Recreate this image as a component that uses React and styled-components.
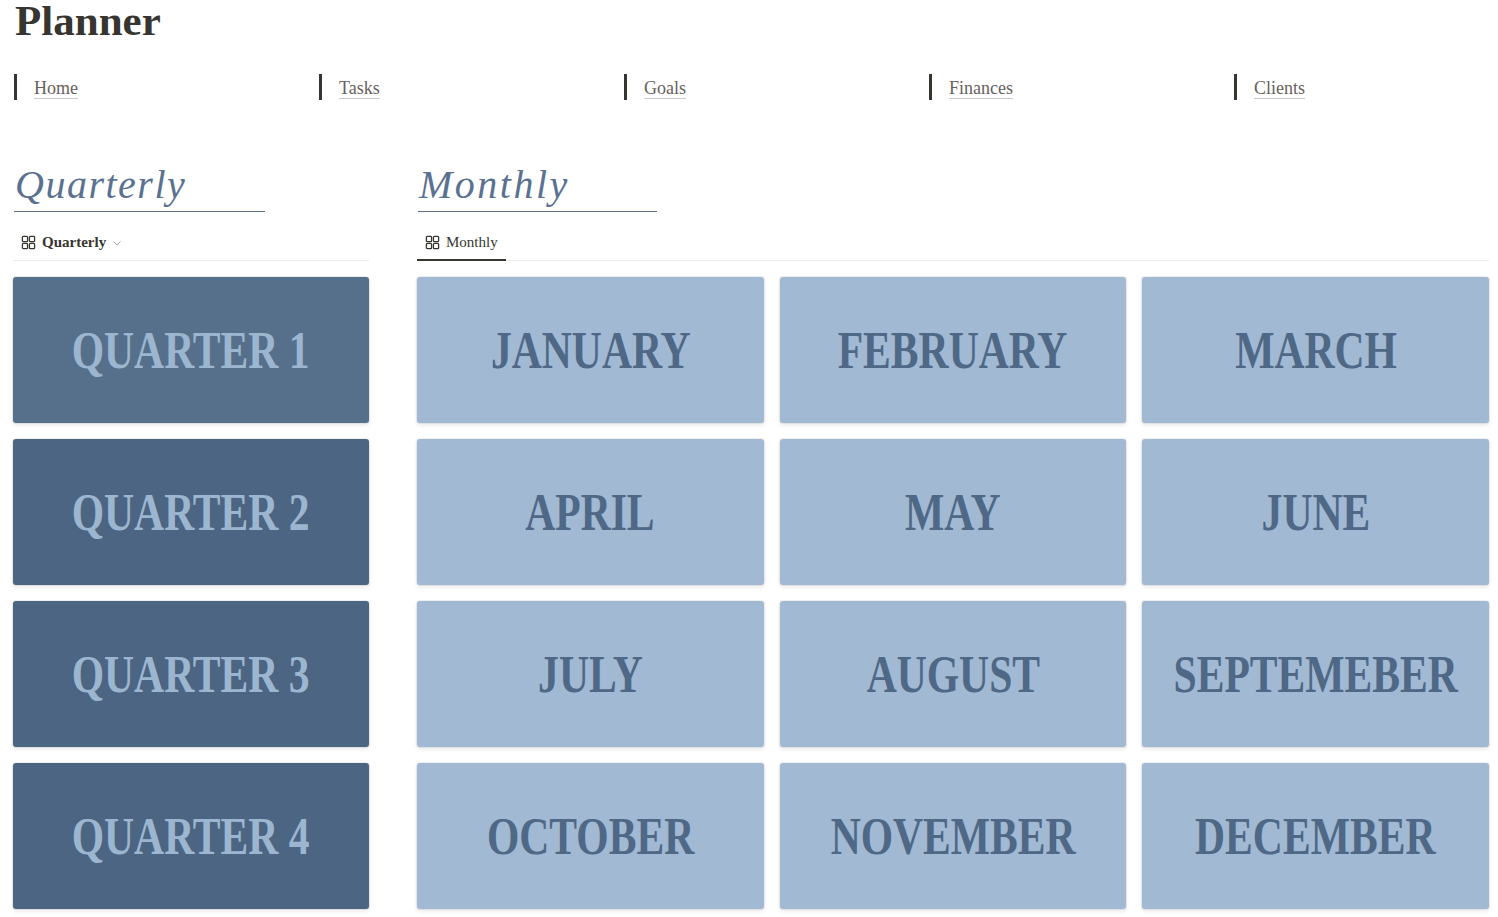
import React from "react";
import styled, { createGlobalStyle } from "styled-components";

const GlobalStyle = createGlobalStyle`
  html, body {
    margin: 0;
    padding: 0;
    background: #ffffff;
    font-family: "Liberation Serif", "DejaVu Serif", serif;
    color: #37352f;
  }
  * { box-sizing: border-box; }
`;

const Page = styled.div`
  padding: 0 9px 0 13px;
  width: 1498px;
  height: 917px;
  overflow: hidden;
`;

const Title = styled.h1`
  margin: 0 0 0 2px;
  font-size: 43px;
  line-height: 42px;
  font-weight: 700;
  color: #37352f;
`;

const Nav = styled.nav`
  display: grid;
  grid-template-columns: repeat(5, 255px);
  column-gap: 50px;
  margin-top: 32px;
  padding-left: 1px;
`;

const NavItem = styled.div`
  display: flex;
  align-items: center;
  height: 26px;
  border-left: 3px solid #37352f;
  padding-left: 17px;
`;

const NavLink = styled.a`
  font-size: 18px;
  line-height: 20px;
  color: #66625c;
  text-decoration: none;
  border-bottom: 1px solid #c9c9c7;
  margin-top: 2px;
`;

const Columns = styled.div`
  display: grid;
  grid-template-columns: 356px 1072px;
  column-gap: 48px;
  margin-top: 61px;
`;

const Section = styled.section`
  display: flex;
  flex-direction: column;
  min-width: 0;
`;

const Heading = styled.h2`
  margin: 0 0 0 1px;
  width: ${(p) => p.$line}px;
  font-size: 40px;
  line-height: 48px;
  font-style: italic;
  font-weight: 400;
  letter-spacing: ${(p) => p.$spacing}px;
  color: #5a7190;
  border-bottom: 1px solid #5b6f88;
  padding: 0 0 2px 1px;
`;

const TabBar = styled.div`
  display: flex;
  margin-top: 14px;
  height: 35px;
  border-bottom: 1px solid #ebebea;
`;

const Tab = styled.div`
  display: flex;
  align-items: center;
  gap: 6px;
  padding: 0 8px 0 8px;
  font-size: 15px;
  font-weight: ${(p) => (p.$bold ? 600 : 400)};
  color: #37352f;
  border-bottom: 2px solid ${(p) => (p.$active ? "#37352f" : "transparent")};
  margin-bottom: -1px;
`;

const Grid = styled.div`
  display: grid;
  grid-template-columns: repeat(${(p) => p.$cols}, minmax(0, 1fr));
  grid-auto-rows: 146px;
  gap: 16px 16px;
  margin-top: 16px;
`;

const Card = styled.div`
  display: flex;
  align-items: center;
  justify-content: center;
  overflow: hidden;
  background: ${(p) => p.$bg};
  color: ${(p) => p.$fg};
  border-radius: 3px;
  box-shadow: 0 0 0 1px rgba(15, 15, 15, 0.06), 0 2px 4px rgba(15, 15, 15, 0.1);
`;

const CardLabel = styled.span`
  display: inline-block;
  font-size: 52px;
  line-height: 1;
  font-weight: 700;
  white-space: nowrap;
  transform: scaleX(0.8);
  margin-top: 2px;
`;

const GalleryIcon = () => (
  <svg width="15" height="15" viewBox="0 0 16 16" fill="none" stroke="#37352f" strokeWidth="1.4">
    <rect x="1.5" y="1.5" width="5.5" height="5.5" rx="1" />
    <rect x="9" y="1.5" width="5.5" height="5.5" rx="1" />
    <rect x="1.5" y="9" width="5.5" height="5.5" rx="1" />
    <rect x="9" y="9" width="5.5" height="5.5" rx="1" />
  </svg>
);

const Chevron = () => (
  <svg width="10" height="10" viewBox="0 0 10 10" fill="none" stroke="#a5a4a1" strokeWidth="1">
    <path d="M1.5 3.5 L5 7 L8.5 3.5" />
  </svg>
);

const links = ["Home", "Tasks", "Goals", "Finances", "Clients"];
const quarters = ["QUARTER 1", "QUARTER 2", "QUARTER 3", "QUARTER 4"];
const months = [
  "JANUARY", "FEBRUARY", "MARCH",
  "APRIL", "MAY", "JUNE",
  "JULY", "AUGUST", "SEPTEMEBER",
  "OCTOBER", "NOVEMBER", "DECEMBER",
];

export default function App() {
  return (
    <Page>
      <GlobalStyle />
      <Title>Planner</Title>
      <Nav>
        {links.map((l) => (
          <NavItem key={l}>
            <NavLink href="#">{l}</NavLink>
          </NavItem>
        ))}
      </Nav>
      <Columns>
        <Section>
          <Heading $line={251} $spacing={1.5}>Quarterly</Heading>
          <TabBar>
            <Tab $bold>
              <GalleryIcon />
              Quarterly
              <Chevron />
            </Tab>
          </TabBar>
          <Grid $cols={1}>
            {quarters.map((q, i) => (
              <Card key={q} $bg={i === 0 ? "#56708b" : "#4b6582"} $fg="#9db6d0">
                <CardLabel>{q}</CardLabel>
              </Card>
            ))}
          </Grid>
        </Section>
        <Section>
          <Heading $line={239} $spacing={2.5}>Monthly</Heading>
          <TabBar>
            <Tab $active>
              <GalleryIcon />
              Monthly
            </Tab>
          </TabBar>
          <Grid $cols={3}>
            {months.map((m) => (
              <Card key={m} $bg="#a1b9d3" $fg="#4e6885">
                <CardLabel>{m}</CardLabel>
              </Card>
            ))}
          </Grid>
        </Section>
      </Columns>
    </Page>
  );
}
